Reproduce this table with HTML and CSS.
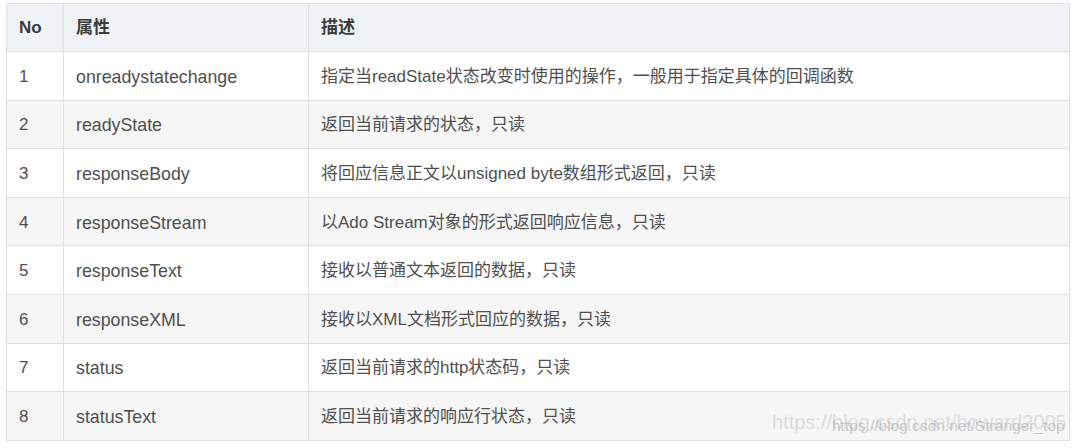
FILE: index.html
```html
<!DOCTYPE html>
<html lang="zh">
<head>
<meta charset="utf-8">
<link rel="stylesheet" href="styles.css">
</head>
<body>
<div class="wrap">
<table class="tbl">
<thead>
<tr><th class="c1">No</th><th class="c2">属性</th><th class="c3">描述</th></tr>
</thead>
<tbody>
<tr><td>1</td><td class="nm">onreadystatechange</td><td>指定当readState状态改变时使用的操作，一般用于指定具体的回调函数</td></tr>
<tr><td>2</td><td class="nm">readyState</td><td>返回当前请求的状态，只读</td></tr>
<tr><td>3</td><td class="nm">responseBody</td><td>将回应信息正文以unsigned byte数组形式返回，只读</td></tr>
<tr><td>4</td><td class="nm">responseStream</td><td>以Ado Stream对象的形式返回响应信息，只读</td></tr>
<tr><td>5</td><td class="nm">responseText</td><td>接收以普通文本返回的数据，只读</td></tr>
<tr><td>6</td><td class="nm">responseXML</td><td>接收以XML文档形式回应的数据，只读</td></tr>
<tr><td>7</td><td class="nm">status</td><td>返回当前请求的http状态码，只读</td></tr>
<tr><td>8</td><td class="nm">statusText</td><td>返回当前请求的响应行状态，只读</td></tr>
</tbody>
</table>
<div class="wm wm-a">https://blog.csdn.net/howard2005</div>
<div class="wm wm-b">https://blog.csdn.net/Stranger_top</div>
</div>
</body>
</html>
```
FILE: styles.css
```css
html, body {
  margin: 0;
  padding: 0;
  background: #ffffff;
}
body {
  font-family: "Liberation Sans", "Noto Sans CJK SC", sans-serif;
  font-size: 17px;
  color: #4f4f4f;
}
.wrap {
  position: relative;
  width: 1077px;
  height: 448px;
  padding: 3px 0 0 6px;
  box-sizing: border-box;
}
.tbl {
  border-collapse: collapse;
  width: 1064px;
  table-layout: fixed;
}
.tbl th, .tbl td {
  border: 1px solid #e0e0e0;
  padding: 0 12px;
  text-align: left;
  vertical-align: middle;
  white-space: nowrap;
  line-height: 20px;
}
.tbl th {
  background: #eff3f5;
  color: #3b3b3b;
  font-weight: bold;
  height: 46px;
  padding-top: 1px;
}
.tbl td {
  height: 45.6px;
  padding-top: 2px;
}
.tbl td.nm {
  font-size: 17.8px;
}
.c1 { width: 32px; }
.c2 { width: 220px; }
.tbl tbody tr:nth-child(even) td {
  background: #f6f6f6;
}
.wm {
  position: absolute;
  white-space: nowrap;
  font-family: "Liberation Sans", sans-serif;
}
.wm-a {
  left: 772px;
  top: 411px;
  font-size: 20px;
  color: rgba(200, 200, 200, 0.55);
}
.wm-b {
  left: 832px;
  top: 417px;
  font-size: 15.5px;
  color: rgba(170, 170, 170, 0.6);
}
```
